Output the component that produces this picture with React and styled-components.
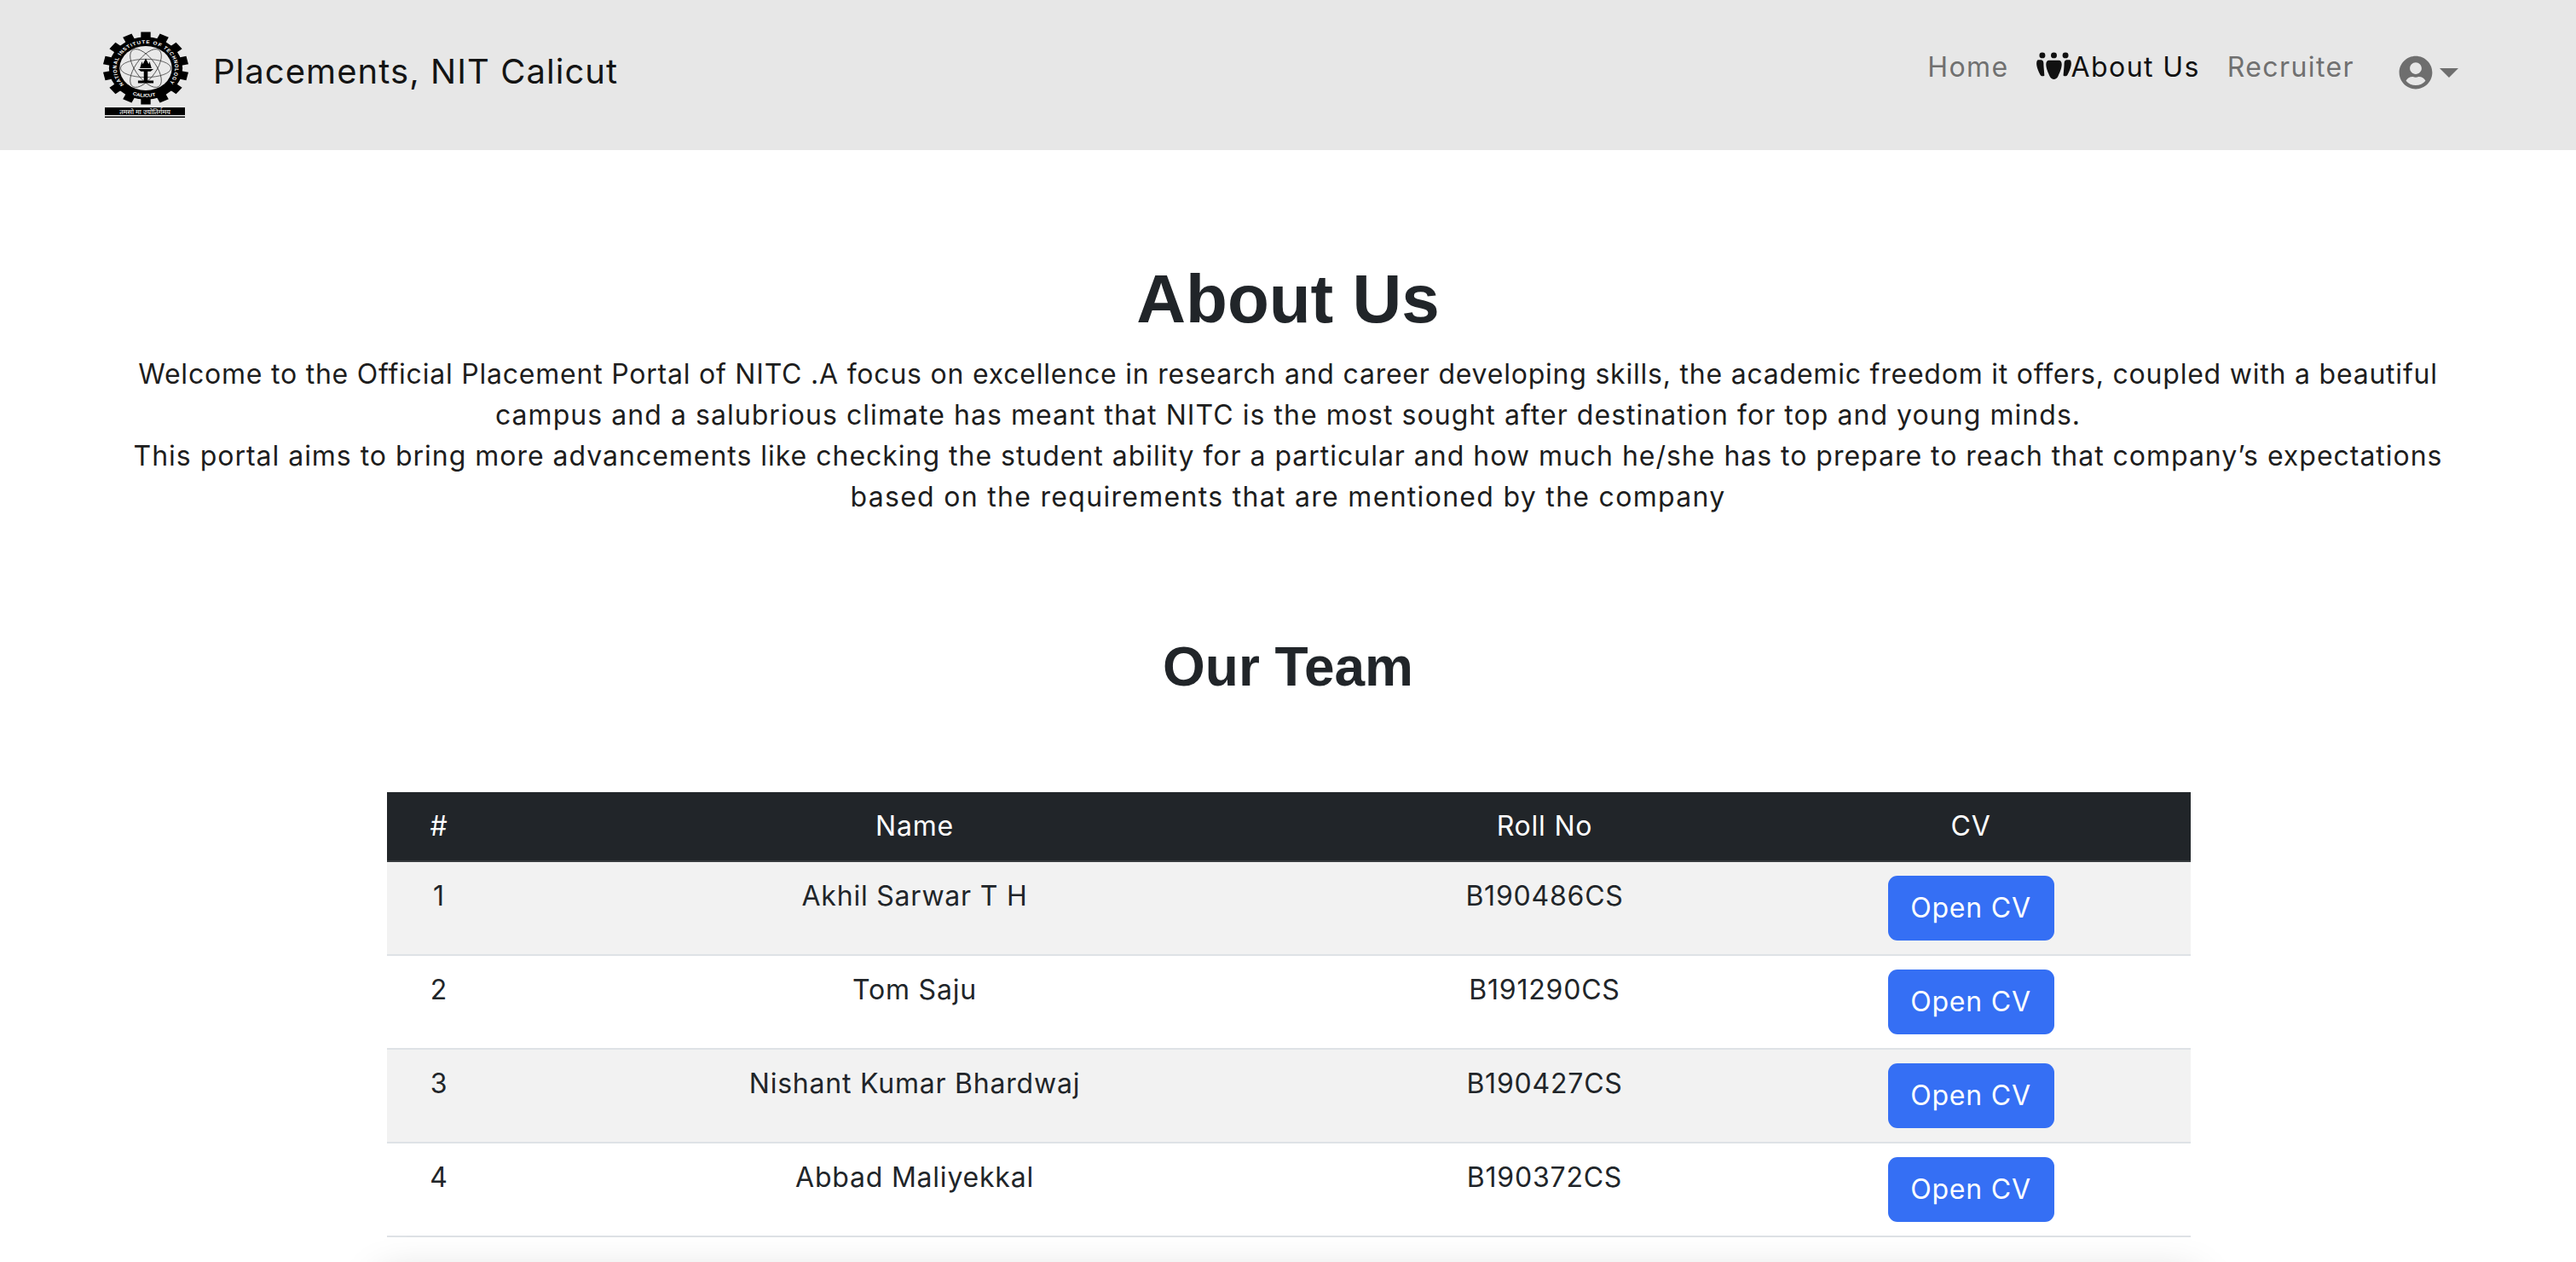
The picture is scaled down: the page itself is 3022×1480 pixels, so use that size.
import React from "react";
import styled, { createGlobalStyle } from "styled-components";
import { FaUserCircle } from "react-icons/fa";

const Global = createGlobalStyle`
  html, body { margin: 0; padding: 0; background: #fff; height: 1480px; overflow: hidden; }
  body { font-family: "Inter", "Liberation Sans", sans-serif; color: #212529; font-size: 32px; line-height: 48px; letter-spacing: 0.78px; }
  * { box-sizing: border-box; }
`;

const Nav = styled.nav`
  height: 176px;
  background: #e7e7e7;
  display: flex;
  align-items: center;
  justify-content: space-between;
  padding: 0 138px 0 120px;
`;
const Brand = styled.div`
  display: flex;
  align-items: center;
  gap: 28px;
  font-size: 40px;
  letter-spacing: 1.05px;
  color: #141414;
  & > span {
    margin-top: -8px;
  }
`;
const Links = styled.div`
  display: flex;
  align-items: center;
  font-size: 32px;
  letter-spacing: 1.4px;
  margin-top: -18px;
`;
const NavLink = styled.a`
  display: flex;
  align-items: center;
  color: ${(p) => (p.$active ? "#111" : "#707070")};
  margin-right: 32px;
`;
const Account = styled.div`
  display: flex;
  align-items: center;
  gap: 8px;
  color: #6e6e6e;
  margin-left: 20px;
  margin-top: 12px;
`;
const Caret = styled.span`
  width: 0;
  height: 0;
  border-left: 11px solid transparent;
  border-right: 11px solid transparent;
  border-top: 11px solid #6e6e6e;
`;
const Main = styled.main`
  text-align: center;
  padding-top: 127px;
`;
const H1 = styled.h1`
  font: 700 80px/96px "Liberation Sans", sans-serif;
  letter-spacing: 0;
  margin: 0 0 16px;
`;
const Intro = styled.div`
  color: #1d1d1d;
`;
const IntroLine = styled.p`
  margin: 0;
  letter-spacing: ${(p) => p.$tracking}px;
`;
const H2 = styled.h2`
  font: 700 64px/77px "Liberation Sans", sans-serif;
  letter-spacing: 0;
  margin: 137px 0 108px;
`;
const Table = styled.table`
  width: 2116px;
  margin: 0 0 0 454px;
  border-collapse: collapse;
  table-layout: fixed;
`;
const Th = styled.th`
  background: #212529;
  color: #fff;
  font-weight: 400;
  padding: 16px;
  height: 81px;
  border-bottom: 2px solid #373b3e;
`;
const Row = styled.tr`
  background: ${(p) => (p.$odd ? "#f2f2f2" : "#fff")};
  border-bottom: 2px solid #dee2e6;
`;
const Td = styled.td`
  padding: 16px;
  vertical-align: top;
  color: #212529;
  height: 109px;
`;
const Button = styled.button`
  font: inherit;
  letter-spacing: inherit;
  display: block;
  margin: 0 auto;
  height: 76px;
  width: 195px;
  padding: 0;
  color: #fff;
  background: #356ff4;
  border: 0;
  border-radius: 11px;
`;
const Card = styled.div`
  width: 2130px;
  height: 200px;
  margin: 48px auto 0;
  background: #fff;
  box-shadow: 0 0 48px rgba(0, 0, 0, 0.2);
`;

const rows = [
  ["Akhil Sarwar T H", "B190486CS"],
  ["Tom Saju", "B191290CS"],
  ["Nishant Kumar Bhardwaj", "B190427CS"],
  ["Abbad Maliyekkal", "B190372CS"],
];

const introLines = [
  ["Welcome to the Official Placement Portal of NITC .A focus on excellence in research and career developing skills, the academic freedom it offers, coupled with a beautiful", 0.78],
  ["campus and a salubrious climate has meant that NITC is the most sought after destination for top and young minds.", 1.05],
  ["This portal aims to bring more advancements like checking the student ability for a particular and how much he/she has to prepare to reach that company’s expectations", 0.98],
  ["based on the requirements that are mentioned by the company", 1.3],
];

const Logo = () => {
  const teeth = Array.from({ length: 14 }, (_, i) => (i * 360) / 14);
  return (
    <svg width="102" height="102" viewBox="0 0 102 102" letterSpacing="0" style={{ display: "block" }}>
      <g transform="translate(51 43) scale(1.136 0.966) translate(-51 -44)">
        {teeth.map((a) => (
          <rect key={a} x="46" y="0" width="10" height="12" fill="#000" transform={`rotate(${a} 51 44)`} />
        ))}
        <circle cx="51" cy="44" r="38" fill="#000" />
        <circle cx="51" cy="44" r="27" fill="#e9e9e9" />
        <g fill="none" stroke="#333" strokeWidth="0.7">
          <ellipse cx="51" cy="44" rx="26" ry="11" />
          <ellipse cx="51" cy="44" rx="26" ry="11" transform="rotate(60 51 44)" />
          <ellipse cx="51" cy="44" rx="26" ry="11" transform="rotate(120 51 44)" />
        </g>
        <path d="M43 45h16l-3 3H46zM49 48h4v11h-4zM43 59h16v3H43zM45 44l2-8 1 3 3-7 3 7 1-3 2 8z" fill="#000" />
        <path id="ringTop" d="M29.800 65.200A30 30 0 1 1 72.200 65.200" fill="none" />
        <path id="ringBot" d="M31 72.700A35 35 0 0 0 71 72.700" fill="none" />
        <text fontFamily="Liberation Sans" fontWeight="700" fontSize="5.600" fill="#fff">
          <textPath href="#ringTop" startOffset="2" textLength="134" lengthAdjust="spacing">NATIONAL INSTITUTE OF TECHNOLOGY</textPath>
        </text>
        <text fontFamily="Liberation Sans" fontWeight="700" fontSize="5.600" fill="#fff">
          <textPath href="#ringBot" startOffset="7">CALICUT</textPath>
        </text>
      </g>
      <rect x="3" y="89" width="94" height="9" fill="#000" />
      <rect x="3" y="99.500" width="94" height="1.500" fill="#000" />
      <text x="50" y="96.500" textAnchor="middle" fontFamily="Noto Sans, Liberation Sans" fontSize="8" fill="#fff">तमसो मा ज्योतिर्गमय</text>
    </svg>
  );
};

const PeopleIcon = () => (
  <svg width="41" height="32" viewBox="0 0 42 33" fill="#111" style={{ display: "block", marginTop: -4 }}>
    <circle cx="7" cy="4" r="3.600" />
    <circle cx="21" cy="4" r="3.600" />
    <circle cx="35" cy="4" r="3.600" />
    <path d="M2 9.500h3.500c1 0 3 1 3 4 0 5 1 12 1 15-2 1.500-4 .5-5-1C2.500 24 0 18 0 14c0-3 1-4.500 2-4.500z" />
    <path d="M40 9.500h-3.500c-1 0-3 1-3 4 0 5-1 12-1 15 2 1.500 4 .5 5-1 2-3.500 4.500-9.500 4.500-13.500 0-3-1-4.500-2-4.500z" />
    <path d="M15 10h12c2 0 3.500 2 3.500 5 0 5-3 11-4.500 14.500C25 32 23 33 21 33s-4-1-5-3.500C14.500 26 11.500 20 11.500 15c0-3 1.500-5 3.500-5z" />
  </svg>
);

export default function App() {
  return (
    <>
      <Global />
      <Nav>
        <Brand>
          <Logo />
          <span>Placements, NIT Calicut</span>
        </Brand>
        <Links>
          <NavLink>Home</NavLink>
          <NavLink $active>
            <PeopleIcon />
            About Us
          </NavLink>
          <NavLink>Recruiter</NavLink>
          <Account>
            <FaUserCircle size={40} />
            <Caret />
          </Account>
        </Links>
      </Nav>
      <Main>
        <H1>About Us</H1>
        <Intro>
          {introLines.map(([text, tracking]) => (
            <IntroLine key={tracking} $tracking={tracking}>{text}</IntroLine>
          ))}
        </Intro>
        <H2>Our Team</H2>
        <Table>
          <colgroup>
            <col style={{ width: 122 }} />
            <col style={{ width: 994 }} />
            <col style={{ width: 484 }} />
            <col style={{ width: 516 }} />
          </colgroup>
          <thead>
            <tr>
              <Th>#</Th>
              <Th>Name</Th>
              <Th>Roll No</Th>
              <Th>CV</Th>
            </tr>
          </thead>
          <tbody>
            {rows.map(([name, roll], i) => (
              <Row key={roll} $odd={i % 2 === 0}>
                <Td>{i + 1}</Td>
                <Td>{name}</Td>
                <Td>{roll}</Td>
                <Td>
                  <Button>Open CV</Button>
                </Td>
              </Row>
            ))}
          </tbody>
        </Table>
        <Card />
      </Main>
    </>
  );
}
